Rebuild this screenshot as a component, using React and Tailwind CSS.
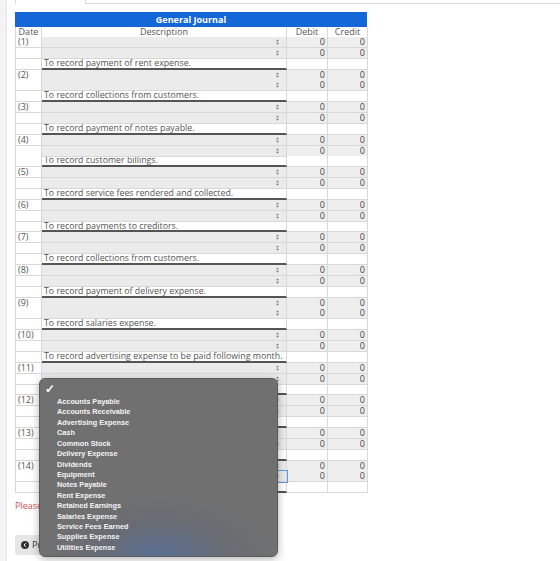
import React from 'react';

const memos = [
    'To record payment of rent expense.',
    'To record collections from customers.',
    'To record payment of notes payable.',
    'To record customer billings.',
    'To record service fees rendered and collected.',
    'To record payments to creditors.',
    'To record collections from customers.',
    'To record payment of delivery expense.',
    'To record salaries expense.',
    'To record advertising expense to be paid following month.',
    '',
    '',
    '',
    '',
];

const accounts = [
    'Accounts Payable',
    'Accounts Receivable',
    'Advertising Expense',
    'Cash',
    'Common Stock',
    'Delivery Expense',
    'Dividends',
    'Equipment',
    'Notes Payable',
    'Rent Expense',
    'Retained Earnings',
    'Salaries Expense',
    'Service Fees Earned',
    'Supplies Expense',
    'Utilities Expense',
];

function Stepper() {
    return (
        <svg width="3" height="6" viewBox="0 0 4 7" className="absolute right-[7px] top-[2px]">
            <polygon points="2,0 4,2.6 0,2.6" fill="#7a7a7a" />
            <polygon points="0,4.4 4,4.4 2,7" fill="#7a7a7a" />
        </svg>
    );
}

function AccountRow({ label, focused }) {
    return (
        <div className="grid grid-cols-[26px_245px_41px_40px] h-[10.87px]">
            <div className="border-r border-b border-[#d8d8d8] bg-white pl-[2px] leading-[10px] text-[#555]">{label}</div>
            <div className={`relative border-r border-b border-[#d8d8d8] bg-[#ebebeb] ${focused ? 'outline outline-1 outline-[#5f9be0]' : ''}`}>
                <Stepper />
            </div>
            <div className="border-r border-b border-[#d8d8d8] bg-[#eeeeee] pr-[2px] text-right leading-[10px] text-[#444]">0</div>
            <div className="border-r border-b border-[#d8d8d8] bg-[#eeeeee] pr-[2px] text-right leading-[10px] text-[#444]">0</div>
        </div>
    );
}

function MemoRow({ text }) {
    return (
        <div className="grid grid-cols-[26px_245px_41px_40px] h-[10.87px]">
            <div className="border-r border-b border-[#d8d8d8] bg-white"></div>
            <div className="border-r border-b-2 border-r-[#d8d8d8] border-b-[#555] bg-white pl-[2px] text-[8.8px] leading-[8.8px] text-[#555] whitespace-nowrap">{text}</div>
            <div className="border-r border-b border-[#d8d8d8] bg-white"></div>
            <div className="border-r border-b border-[#d8d8d8] bg-white"></div>
        </div>
    );
}

export default function App() {
    return (
        <div className="relative flex w-[560px] h-[561px] overflow-hidden bg-white font-['Open_Sans',sans-serif]">
            <div className="w-[7px] shrink-0 bg-[#f3f3f3] border-r border-[#e6e6e6]"></div>

            <div className="flex-1">
                {/* tab strip cut off at the top */}
                <div className="flex h-[4px] pl-[8px]">
                    <div className="w-[71px] border-l border-r border-[#dcdcdc]"></div>
                    <div className="flex-1 border-b border-[#dcdcdc]"></div>
                </div>

                <div className="mt-[8px] ml-[8px] w-[352px] text-[9px]">
                    <div className="h-[15px] bg-[#1467d7] text-center font-bold leading-[15px] text-white">General Journal</div>

                    <div className="grid grid-cols-[26px_245px_41px_40px] h-[10px] border-l border-[#d8d8d8] text-[#555] leading-[10px]">
                        <div className="border-r border-b border-[#d8d8d8] text-center">Date</div>
                        <div className="border-r border-b border-[#d8d8d8] text-center">Description</div>
                        <div className="border-r border-b-2 border-r-[#d8d8d8] border-b-[#555] text-center">Debit</div>
                        <div className="border-r border-b-2 border-r-[#d8d8d8] border-b-[#555] text-center">Credit</div>
                    </div>

                    <div className="border-l border-[#d8d8d8]">
                        {memos.map((memo, i) => (
                            <div key={i}>
                                <AccountRow label={`(${i + 1})`} />
                                <AccountRow label="" focused={i === 13} />
                                <MemoRow text={memo} />
                            </div>
                        ))}
                    </div>
                </div>

                <p className="mt-[6px] ml-[8px] text-[9px] text-[#d9534f]">Please answer all parts of the question.</p>

                <button className="mt-[22px] ml-[8px] flex h-[20px] items-center gap-[3px] rounded-[3px] bg-[#e6e6e6] px-[6px] text-[9px] text-[#333]">
                    <svg width="8" height="8" viewBox="0 0 16 16">
                        <circle cx="8" cy="8" r="8" fill="#333" />
                        <path d="M9.5 4.5 6 8l3.5 3.5" stroke="#fff" strokeWidth="2" fill="none" />
                    </svg>
                    Previous
                </button>
            </div>

            {/* open account picker */}
            <div className="absolute left-[39px] top-[378px] w-[239px] h-[179px] rounded-[6px] border border-[#5a5a5a] shadow-[0_2px_8px_rgba(0,0,0,0.3)] bg-[radial-gradient(ellipse_50%_35%_at_50%_100%,#5a6f93_0%,#686c73_55%,#707070_100%)] pt-[3px] font-['Liberation_Sans',Arial,sans-serif] text-white">
                <div className="h-[15px] pl-[5px] text-[12px] font-bold leading-[14px]">✓</div>
                {accounts.map((name) => (
                    <div key={name} className="h-[10.43px] pl-[17px] text-[7.3px] font-bold leading-[10.43px] text-[#f4f4f4]">{name}</div>
                ))}
            </div>
        </div>
    );
}
